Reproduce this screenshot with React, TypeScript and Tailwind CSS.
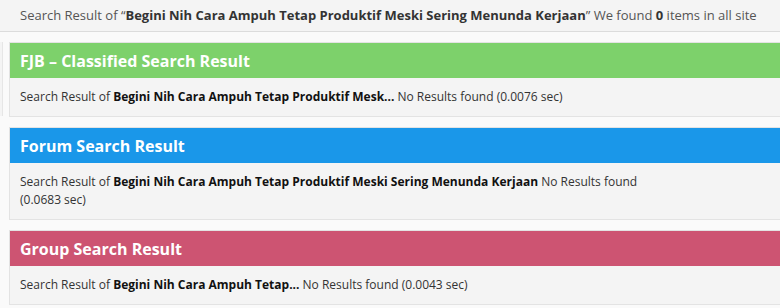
import React from "react";

const Q = "Begini Nih Cara Ampuh Tetap Produktif Meski Sering Menunda Kerjaan";

function Card({
  title,
  color,
  query,
  result,
}: {
  title: string;
  color: string;
  query: string;
  result: string;
}) {
  return (
    <div className="w-[900px] border border-[#e3e3e3] bg-[#f4f4f4]">
      <div className={`${color} h-[35px] px-[10px] flex items-center text-[16px] font-bold text-white leading-none`}>
        {title}
      </div>
      <div className="px-[10px] py-[10px] text-[12px] leading-[18px] text-[#333]">
        <div className="w-[640px]">
          Search Result of <b className="text-[#111]">{query}</b> {result}
        </div>
      </div>
    </div>
  );
}

export default function App() {
  return (
    <div
      className="w-[780px] h-[308px] overflow-hidden bg-[#fafafa]"
      style={{ fontFamily: '"Open Sans", sans-serif' }}
    >
      <div className="h-[32px] bg-[#f4f4f4] border-b border-[#dcdcdc] px-[20px] flex items-center text-[13px] text-[#555] whitespace-nowrap">
        <span>
          Search Result of “<b className="text-[#333]">{Q}</b>” We found <b className="text-[#333]">0</b> items in all site
        </span>
      </div>
      <div className="flex pt-[10px]">
        <div className="w-[3px] h-[74px] border-r border-[#e6e6e6] bg-[#f4f4f4] shrink-0" />
        <div className="ml-[6px] flex flex-col gap-[10px]">
          <Card
            title="FJB – Classified Search Result"
            color="bg-[#7dd16b]"
            query="Begini Nih Cara Ampuh Tetap Produktif Mesk..."
            result="No Results found (0.0076 sec)"
          />
          <Card
            title="Forum Search Result"
            color="bg-[#1a97e9]"
            query={Q}
            result="No Results found (0.0683 sec)"
          />
          <Card
            title="Group Search Result"
            color="bg-[#cd5472]"
            query="Begini Nih Cara Ampuh Tetap..."
            result="No Results found (0.0043 sec)"
          />
        </div>
      </div>
    </div>
  );
}
